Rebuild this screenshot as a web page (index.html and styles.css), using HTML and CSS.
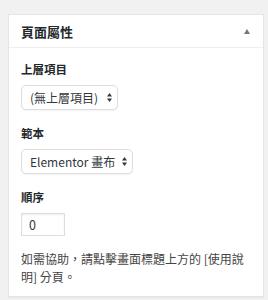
FILE: index.html
```html
<html lang="zh-Hant">
<head>
    <meta charset="UTF-8">
    <title>頁面屬性</title>
    <link rel="stylesheet" href="styles.css">
</head>
<body>
    <!-- Page attributes box -->
    <div class="postbox">
        <div class="hndle">
            <h2>頁面屬性</h2>
            <span class="toggle-arrow"></span>
        </div>
        <div class="inside">
            <p class="attr-label">上層項目</p>
            <span class="select-wrap">
                <select class="parent-select">
                    <option>(無上層項目)</option>
                </select>
                <svg class="updown" width="5" height="9" viewBox="0 0 5 9">
                    <path d="M2.5 0 L5 3.5 L0 3.5 Z M0 5.5 L5 5.5 L2.5 9 Z" fill="#32373c"/>
                </svg>
            </span>

            <p class="attr-label">範本</p>
            <span class="select-wrap">
                <select class="template-select">
                    <option>Elementor 畫布</option>
                </select>
                <svg class="updown" width="5" height="9" viewBox="0 0 5 9">
                    <path d="M2.5 0 L5 3.5 L0 3.5 Z M0 5.5 L5 5.5 L2.5 9 Z" fill="#32373c"/>
                </svg>
            </span>

            <p class="attr-label">順序</p>
            <input class="menu-order" type="text" value="0">

            <p class="help">如需協助，請點擊畫面標題上方的 [使用說明] 分頁。</p>
        </div>
    </div>
</body>
</html>
```

FILE: styles.css
```css
/* General */
body {
    margin: 0;
    padding: 14px 5px 0 8px;
    background-color: #f1f1f1;
    font-family: "Noto Sans CJK TC", "Noto Sans", sans-serif;
    font-size: 12px;
    color: #444;
}

/* Box */
.postbox {
    width: 254px;
    height: 281px;
    background-color: #fff;
    border: 1px solid #e5e5e5;
    box-shadow: 0 1px 1px rgba(0, 0, 0, 0.04);
}

.hndle {
    display: flex;
    align-items: center;
    justify-content: space-between;
    height: 32px;
    padding: 0 12px 0 12px;
    border-bottom: 1px solid #eee;
}

.hndle h2 {
    margin: 0;
    font-size: 13px;
    font-weight: 700;
    color: #23282d;
}

.toggle-arrow {
    width: 0;
    height: 0;
    margin-right: 1px;
    border-left: 3.5px solid transparent;
    border-right: 3.5px solid transparent;
    border-bottom: 5px solid #72777c;
}

.inside {
    padding: 13px 12px 10px 12px;
}

.attr-label {
    margin: 0 0 8px 0;
    font-size: 11.5px;
    line-height: 16px;
    font-weight: 600;
    color: #23282d;
}

/* Selects */
.select-wrap {
    position: relative;
    display: inline-block;
    margin-bottom: 15px;
    vertical-align: top;
}

select {
    -webkit-appearance: none;
    appearance: none;
    display: block;
    height: 25px;
    padding: 0 0 0 8px;
    border: 1px solid #ddd;
    border-radius: 5px;
    background-color: #fff;
    font-family: inherit;
    font-size: 12px;
    color: #32373c;
    box-shadow: 0 1px 1px rgba(0, 0, 0, 0.05);
}

.parent-select {
    width: 97px;
}

.template-select {
    width: 112px;
}

.updown {
    position: absolute;
    right: 6px;
    top: 8px;
}

/* Order */
.menu-order {
    display: block;
    box-sizing: border-box;
    width: 44px;
    height: 23px;
    padding: 0 7px;
    border: 1px solid #ddd;
    border-radius: 0;
    font-family: inherit;
    font-size: 12.5px;
    color: #32373c;
    box-shadow: inset 0 1px 2px rgba(0, 0, 0, 0.07);
}

.help {
    margin: 14px 0 0 0;
    font-size: 12px;
    line-height: 18px;
    color: #444;
}
```
